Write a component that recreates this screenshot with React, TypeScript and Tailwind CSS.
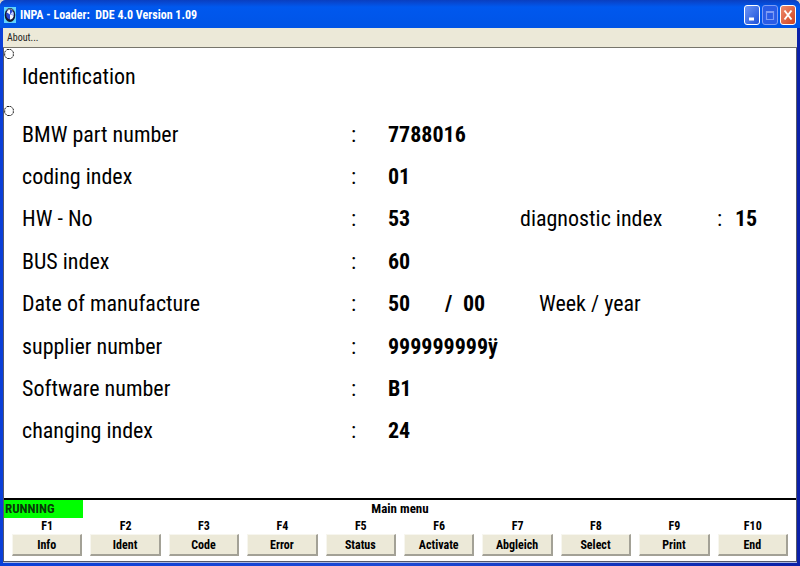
import type { ReactNode } from "react";

type Entry = {
  label: string;
  value: ReactNode;
};

const entries: Entry[] = [
  { label: "BMW part number", value: "7788016" },
  { label: "coding index", value: "01" },
  {
    label: "HW - No",
    value: (
      <span className="grid grid-cols-[132fr_197fr_18fr_61fr]">
        <span>53</span>
        <span className="font-normal">diagnostic index</span>
        <span className="font-normal">:</span>
        <span>15</span>
      </span>
    ),
  },
  { label: "BUS index", value: "60" },
  {
    label: "Date of manufacture",
    value: (
      <span className="grid grid-cols-[57fr_18fr_76fr_257fr]">
        <span>50</span>
        <span>/</span>
        <span>00</span>
        <span className="font-normal">Week / year</span>
      </span>
    ),
  },
  { label: "supplier number", value: "999999999ÿ" },
  { label: "Software number", value: "B1" },
  { label: "changing index", value: "24" },
];

const actions = [
  "Info",
  "Ident",
  "Code",
  "Error",
  "Status",
  "Activate",
  "Abgleich",
  "Select",
  "Print",
  "End",
];

function Logo() {
  return (
    <svg className="h-4 w-3 shrink-0" viewBox="0 0 12 16" aria-hidden="true">
      <rect width="12" height="16" fill="#62d4fb" />
      <ellipse cx="6" cy="8" rx="5.300" ry="7" fill="#14182f" />
      <ellipse cx="6" cy="7.500" rx="3.800" ry="5" fill="#2a48cf" />
      <path d="M2.600 5.200Q4 2.500 6 2.500L6 7.500zM6 7.500L9.700 8.500Q9 12.500 6 12.500z" fill="#f4f6ff" />
      <path d="M6 7.500L8.800 4.200Q10 6 9.700 8zM6 7.500L2.500 9.500" fill="#c9d3ff" />
      <path d="M2.500 3.400Q6 .4 9.500 3.400" fill="none" stroke="#aab3cd" strokeWidth=".7" />
    </svg>
  );
}

function Marker() {
  return (
    <div className="w-[18px] shrink-0">
      <svg className="h-3 w-2.5" viewBox="0 0 10 12" aria-hidden="true">
        <path
          d="M3 1.500h4L9.300 4v4L7 10.500H3L.7 8V4z"
          fill="none"
          stroke="#222"
          strokeWidth="1"
          strokeDasharray="2.500 .7"
        />
      </svg>
    </div>
  );
}

function WindowButtons() {
  const base =
    "flex h-5 w-4 items-center justify-center rounded-[3px] border";

  return (
    <div className="flex gap-0.5">
      <button
        type="button"
        aria-label="Minimize"
        className={`${base} border-white bg-linear-to-br from-[#6d94f5] to-[#1c4fd8]`}
      >
        <svg className="h-4 w-3.5" viewBox="0 0 14 16" aria-hidden="true">
          <path d="M4 12h5" stroke="#fff" strokeWidth="3" />
        </svg>
      </button>
      <button
        type="button"
        aria-label="Maximize"
        disabled
        className={`${base} border-[#7d9df5] bg-[#2a5ce6]`}
      >
        <svg className="h-4 w-3.5" viewBox="0 0 14 16" aria-hidden="true">
          <path
            d="M3.500 4.500h7v8h-7zM3 5.500h8"
            fill="none"
            stroke="#7f9cf4"
            strokeWidth="1.200"
          />
        </svg>
      </button>
      <button
        type="button"
        aria-label="Close"
        className={`${base} border-white bg-linear-to-br from-[#ee8a6c] to-[#d0401a]`}
      >
        <svg className="h-4 w-3.5" viewBox="0 0 14 16" aria-hidden="true">
          <path d="M3.500 3.500l7 9M10.500 3.500l-7 9" stroke="#fff" strokeWidth="2" />
        </svg>
      </button>
    </div>
  );
}

export default function App() {
  return (
    <div className="bg-[#d3d0cb]">
      <div className="flex min-h-screen flex-col rounded-t-md bg-linear-to-r from-[#0a3fd8] from-0% via-[#1c49d4] via-50% to-[#0a20a8] to-100% font-['Roboto_Condensed','Liberation_Sans',sans-serif] text-black">
        <header className="flex h-7 items-center justify-between rounded-t-md bg-linear-to-b from-[#0a3fc0] via-[#0058ee] via-25% to-[#0054e6] pt-0.5 pr-1 pl-1">
          <div className="flex items-center gap-1">
            <Logo />
            <h1 className="text-xs font-bold whitespace-pre text-white">
              INPA - Loader:  DDE 4.0 Version 1.09
            </h1>
          </div>
          <WindowButtons />
        </header>

        <div className="mx-[3px] mb-[3px] flex flex-1 flex-col border-b border-[#a9b6e2] bg-white">
          <nav className="flex h-5 items-center border-b border-[#77756b] bg-[#ece9d8] px-1">
            <button type="button" className="text-[10px] text-[#222]">
              About...
            </button>
          </nav>

          <div className="flex flex-1 flex-col border-x border-b border-[#55586a]">
            <main className="flex flex-1 flex-col text-[22px]">
              <section className="flex h-[57px]">
                <Marker />
                <h2 className="self-center">Identification</h2>
              </section>

              <section className="flex flex-1">
                <Marker />
                <dl className="grid flex-1 auto-rows-fr pt-2 pb-[46px]">
                  {entries.map((entry) => (
                    <div
                      className="grid grid-cols-[329fr_37fr_408fr] items-center"
                      key={entry.label}
                    >
                      <dt>{entry.label}</dt>
                      <span aria-hidden="true">:</span>
                      <dd className="font-bold">{entry.value}</dd>
                    </div>
                  ))}
                </dl>
              </section>
            </main>

            <footer className="border-t-2 border-black pb-[5px] text-xs font-bold">
              <div className="grid grid-cols-[1fr_auto_1fr] items-center text-[13px] leading-[18px]">
                <output className="w-1/5 min-w-[79px] bg-[#00ff00] pl-px text-[#083808]">
                  RUNNING
                </output>
                <p>Main menu</p>
              </div>
              <ul className="grid grid-cols-10 gap-2 px-2">
                {actions.map((action, index) => (
                  <li className="flex flex-col text-center" key={action}>
                    <label htmlFor={`action-${index}`} className="leading-4">
                      F{index + 1}
                    </label>
                    <button
                      type="button"
                      id={`action-${index}`}
                      className="h-[22px] border-t border-r-2 border-b-2 border-l border-t-[#f7f6ef] border-r-[#a3a196] border-b-[#a3a196] border-l-[#f7f6ef] bg-[#ece9d8] leading-4"
                    >
                      {action}
                    </button>
                  </li>
                ))}
              </ul>
            </footer>
          </div>
        </div>
      </div>
    </div>
  );
}
